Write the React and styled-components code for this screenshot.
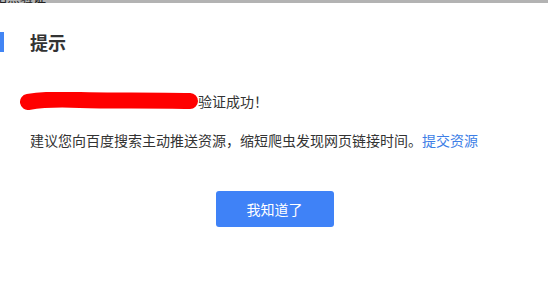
import React from "react";
import styled, { createGlobalStyle } from "styled-components";

const Global = createGlobalStyle`
  html, body {
    margin: 0;
    padding: 0;
    background: #fff;
    font-family: "Noto Sans CJK SC", "Noto Sans", sans-serif;
  }
`;

const Page = styled.div`
  width: 550px;
  height: 286px;
  overflow: hidden;
  background: #fff;
`;

const Backdrop = styled.div`
  height: 3px;
  width: 548px;
  background: #b3b3b3;
  overflow: hidden;
`;

const BackdropText = styled.div`
  font-size: 13px;
  line-height: 13px;
  color: #222;
  margin-top: -10px;
  margin-left: -6px;
`;

const Dialog = styled.div`
  padding-top: 29px;
`;

const Header = styled.div`
  display: flex;
  align-items: center;
  height: 20px;
`;

const Bar = styled.div`
  width: 4px;
  height: 20px;
  background: #4285f4;
`;

const Title = styled.h2`
  margin: 0 0 0 26px;
  font-size: 18px;
  line-height: 20px;
  font-weight: 700;
  color: #333;
`;

const Body = styled.div`
  padding: 39px 0 0 30px;
  display: flex;
  flex-direction: column;
  gap: 19px;
`;

const Line = styled.div`
  display: flex;
  align-items: center;
  height: 20px;
  font-size: 14px;
  line-height: 20px;
  color: #333;
  white-space: nowrap;
`;

const Scribble = styled.svg`
  margin-left: -10px;
  flex: none;
`;

const Link = styled.a`
  color: #3d7ee6;
  text-decoration: none;
`;

const Footer = styled.div`
  display: flex;
  justify-content: center;
  padding-top: 41px;
  padding-right: 1px;
`;

const Button = styled.button`
  width: 118px;
  height: 36px;
  border: none;
  border-radius: 3px;
  background: #3f82f7;
  color: #fff;
  font-family: inherit;
  font-size: 14px;
  cursor: pointer;
`;

export default function App() {
  return (
    <Page>
      <Global />
      <Backdrop>
        <BackdropText>站点验证</BackdropText>
      </Backdrop>
      <Dialog>
        <Header>
          <Bar />
          <Title>提示</Title>
        </Header>
        <Body>
          <Line>
            <Scribble width="178" height="18" viewBox="0 0 178 18">
              <path
                d="M8 10 C 20 8, 40 7, 60 8 C 90 9, 130 8, 170 9"
                stroke="#ff0000"
                strokeWidth="16"
                strokeLinecap="round"
                fill="none"
              />
            </Scribble>
            验证成功！
          </Line>
          <Line>
            建议您向百度搜索主动推送资源，缩短爬虫发现网页链接时间。
            <Link href="#">提交资源</Link>
          </Line>
        </Body>
        <Footer>
          <Button>我知道了</Button>
        </Footer>
      </Dialog>
    </Page>
  );
}
